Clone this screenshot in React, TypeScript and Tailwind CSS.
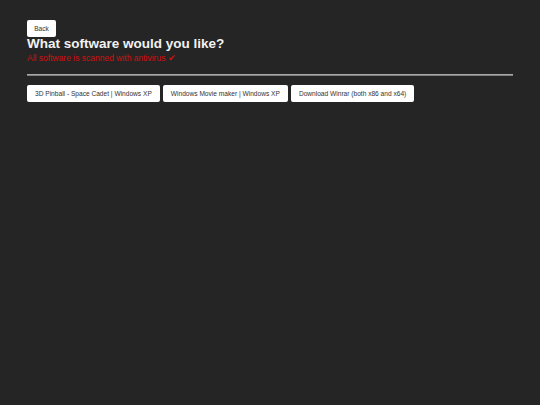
const SOFTWARE = [
  "3D Pinball - Space Cadet | Windows XP",
  "Windows Movie maker | Windows XP",
  "Download Winrar (both x86 and x64)",
];

const App = () => {
  return (
    <div className="min-h-[405px] bg-[#252525] px-[27px] pt-[20px] font-['Liberation_Sans',Arial,sans-serif]">
      <button className="block h-[17px] w-[29px] rounded-[2px] bg-white text-[6.6px] text-[#333]">
        Back
      </button>
      <h1 className="-mt-[1px] text-[13.5px] leading-[15px] font-bold text-[#f2f2f2]">
        What software would you like?
      </h1>
      <p className="mt-[2px] text-[8.5px] leading-[11px] text-[#d01010]">
        All software is scanned with antivirus ✔
      </p>
      <hr className="mt-[10px] w-[486px] border-t border-b border-t-[#a8a8a8] border-b-[#808080]" />
      <div className="mt-[9px] flex gap-[3px]">
        {SOFTWARE.map((name) => (
          <button
            key={name}
            className="h-[17px] rounded-[2px] bg-white px-[8px] text-[6.6px] text-[#333]"
          >
            {name}
          </button>
        ))}
      </div>
    </div>
  );
};

export default App;
